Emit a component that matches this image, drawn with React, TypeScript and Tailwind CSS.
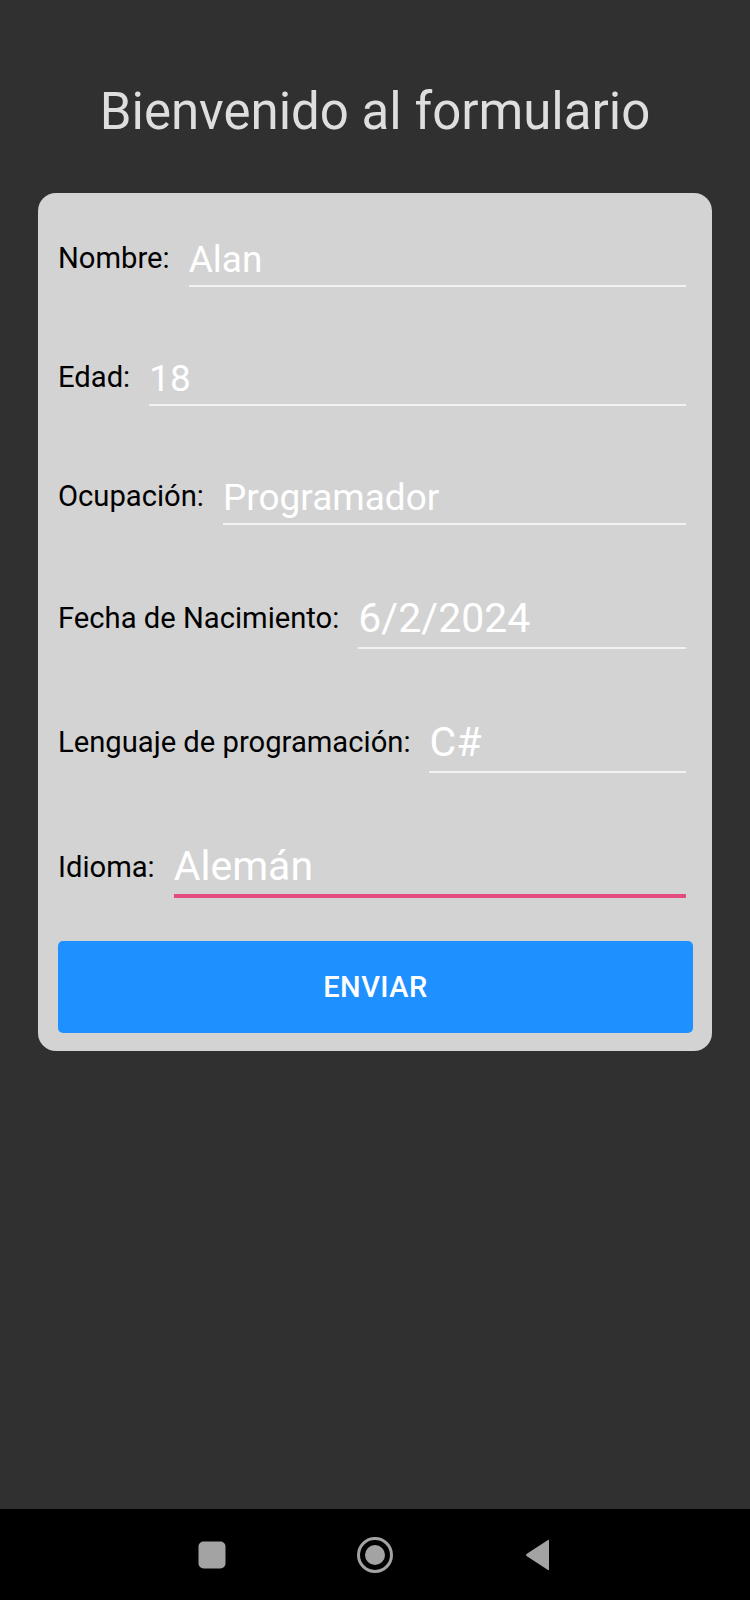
import React from "react";

const font = { fontFamily: "Roboto, 'Noto Sans', Arial, sans-serif" };

function Row({
  label,
  value,
  kind,
}: {
  label: string;
  value: string;
  kind: "entry" | "picker" | "focused";
}) {
  const valueCls =
    kind === "entry"
      ? "text-[37px] leading-none pb-[7px] border-b-2 border-[#f2f2f2]"
      : kind === "picker"
      ? "text-[41px] leading-none pb-[8px] border-b-2 border-[#f2f2f2]"
      : "text-[41px] leading-none pb-[7px] border-b-4 border-[#e44a7c]";
  const labelCls =
    kind === "entry" ? "mb-[14px]" : kind === "picker" ? "mb-[16px]" : "mb-[16px]";
  return (
    <div className="flex items-end mr-[7px]">
      <span className={`text-[29.2px] leading-none text-black whitespace-nowrap ${labelCls}`}>
        {label}
      </span>
      <div className={`flex-1 ml-[19px] text-white ${valueCls}`}>{value}</div>
    </div>
  );
}

export default function App() {
  return (
    <div className="w-[750px] h-[1600px] flex flex-col" style={font}>
      <div className="flex-1 bg-[#303030] flex flex-col px-[38px] pt-[86px]">
        <h1 className="text-center text-[51px] leading-none text-[#dedede] font-normal">
          Bienvenido al formulario
        </h1>
        <div className="mt-[56px] bg-[#d3d3d3] rounded-[18px] pl-[20px] pr-[19px] pt-[48px] pb-[18px] flex flex-col">
          <div className="flex flex-col gap-[73px]">
            <Row label="Nombre:" value="Alan" kind="entry" />
            <Row label="Edad:" value="18" kind="entry" />
            <Row label="Ocupación:" value="Programador" kind="entry" />
            <Row label="Fecha de Nacimiento:" value="6/2/2024" kind="picker" />
            <Row label="Lenguaje de programación:" value="C#" kind="picker" />
            <Row label="Idioma:" value="Alemán" kind="focused" />
          </div>
          <button className="mt-[43px] h-[92px] w-full rounded-[5px] bg-[#1e90ff] text-white text-[29px] font-medium tracking-[0.5px] leading-none">
            ENVIAR
          </button>
        </div>
      </div>
      <div className="h-[91px] bg-black flex items-center justify-center">
        <div className="grid grid-cols-3 w-[490px] items-center justify-items-center">
          <svg width="28" height="28" viewBox="0 0 28 28">
            <rect x="0.5" y="0.5" width="27" height="27" rx="5" fill="#a3a3a3" />
          </svg>
          <svg width="40" height="40" viewBox="0 0 40 40">
            <circle cx="20" cy="20" r="16.5" fill="none" stroke="#a3a3a3" strokeWidth="3" />
            <circle cx="20" cy="20" r="10" fill="#a3a3a3" />
          </svg>
          <svg width="28" height="32" viewBox="0 0 28 32">
            <path
              d="M25 1.5 L25 30.5 Q25 31.5 24 31 L2.5 17 Q1.5 16 2.5 15 L24 1 Q25 0.5 25 1.5 Z"
              fill="#a3a3a3"
            />
          </svg>
        </div>
      </div>
    </div>
  );
}
